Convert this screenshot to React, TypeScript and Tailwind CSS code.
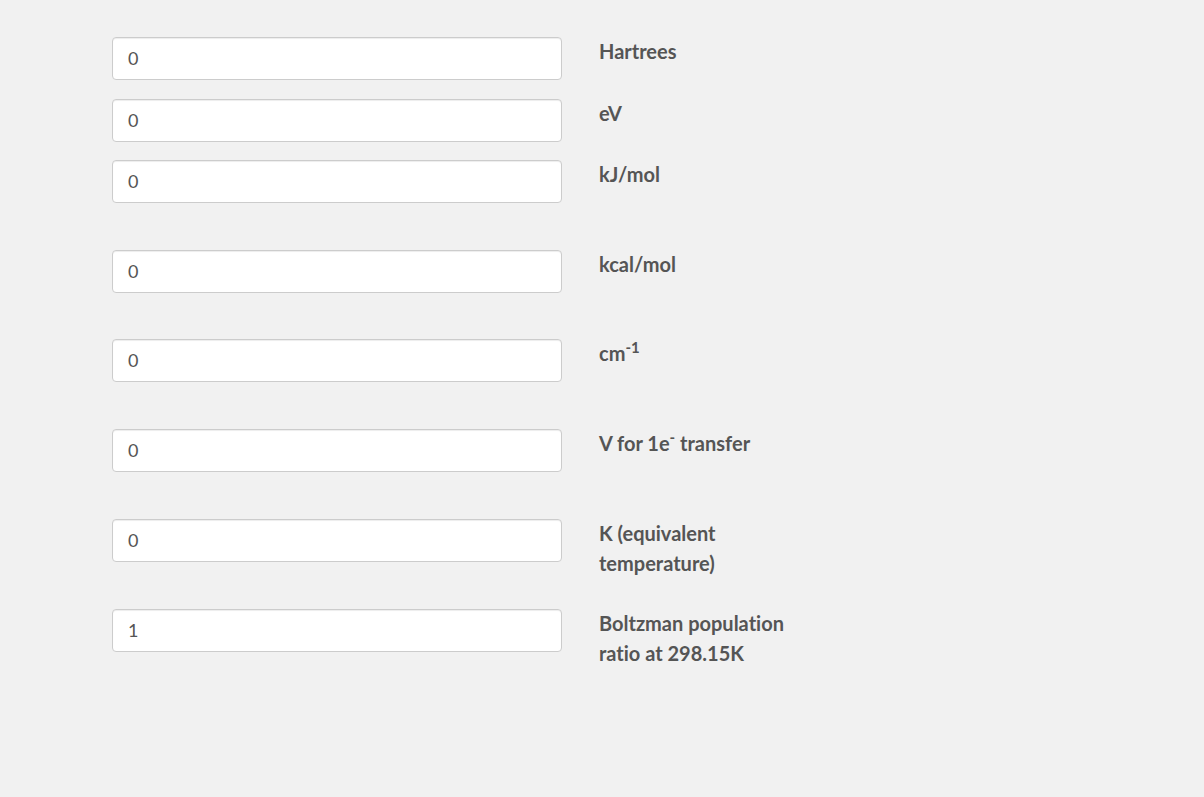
import React from 'react';

type Row = { value: string; label: React.ReactNode; h: string };

const rows: Row[] = [
  { value: '0', label: 'Hartrees', h: 'h-[62px]' },
  { value: '0', label: 'eV', h: 'h-[61px]' },
  { value: '0', label: 'kJ/mol', h: 'h-[90px]' },
  { value: '0', label: 'kcal/mol', h: 'h-[89px]' },
  {
    value: '0',
    label: (
      <>
        cm<sup className="text-[15px] relative -top-[8px]">-1</sup>
      </>
    ),
    h: 'h-[90px]',
  },
  {
    value: '0',
    label: (
      <>
        V for 1e<sup className="text-[15px] relative -top-[8px]">-</sup> transfer
      </>
    ),
    h: 'h-[90px]',
  },
  { value: '0', label: 'K (equivalent temperature)', h: 'h-[90px]' },
  { value: '1', label: 'Boltzman population ratio at 298.15K', h: 'h-[90px]' },
];

export default function App() {
  return (
    <div
      className="w-[1204px] h-[797px] bg-[#f1f1f1] overflow-hidden [font-variant-ligatures:none]"
      style={{ fontFamily: 'Lato, "Open Sans", sans-serif' }}
    >
      <div className="pt-[37px] pl-[112px] flex flex-col">
        {rows.map((r, i) => (
          <div key={i} className={`flex items-start gap-[37px] ${r.h}`}>
            <input
              readOnly
              value={r.value}
              className="w-[450px] h-[43px] shrink-0 bg-white border border-[#cccccc] rounded-[4px] px-[15px] pb-[1px] text-[18px] text-[#555555] shadow-[inset_0_1px_1px_rgba(0,0,0,0.075)] outline-none"
              style={{ fontFamily: 'Lato, sans-serif' }}
            />
            <div className="w-[200px] -mt-[1px] text-[20px] leading-[30px] font-bold text-[#555555] [font-variant-ligatures:none]">
              {r.label}
            </div>
          </div>
        ))}
      </div>
    </div>
  );
}
